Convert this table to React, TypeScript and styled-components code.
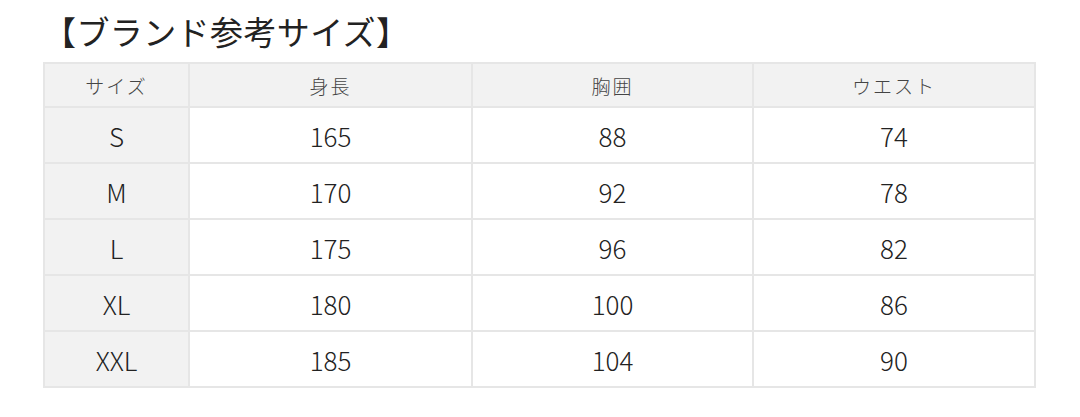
import React from "react";
import styled, { createGlobalStyle } from "styled-components";

const GlobalStyle = createGlobalStyle`
  body {
    margin: 0;
    background: #ffffff;
    font-family: "Noto Sans CJK JP", "Noto Sans", sans-serif;
  }
`;

type Row = {
  size: string;
  height: number;
  chest: number;
  waist: number;
};

const ROWS: Row[] = [
  { size: "S", height: 165, chest: 88, waist: 74 },
  { size: "M", height: 170, chest: 92, waist: 78 },
  { size: "L", height: 175, chest: 96, waist: 82 },
  { size: "XL", height: 180, chest: 100, waist: 86 },
  { size: "XXL", height: 185, chest: 104, waist: 90 },
];

const App: React.FC = () => {
  return (
    <Page>
      <GlobalStyle />
      <Title>【ブランド参考サイズ】</Title>
      <SizeTable>
        <colgroup>
          <col style={{ width: 145 }} />
          <col style={{ width: 283 }} />
          <col style={{ width: 281 }} />
          <col />
        </colgroup>
        <thead>
          <tr>
            <HeadCell>サイズ</HeadCell>
            <HeadCell>身長</HeadCell>
            <HeadCell>胸囲</HeadCell>
            <HeadCell>ウエスト</HeadCell>
          </tr>
        </thead>
        <tbody>
          {ROWS.map((row) => (
            <tr key={row.size}>
              <Cell $label>{row.size}</Cell>
              <Cell>{row.height}</Cell>
              <Cell>{row.chest}</Cell>
              <Cell>{row.waist}</Cell>
            </tr>
          ))}
        </tbody>
      </SizeTable>
    </Page>
  );
};

const Page = styled.div`
  padding: 12px 44px 0 43px;
  width: 993px;
`;

const Title = styled.h2`
  margin: 0 0 12px 0;
  height: 38px;
  line-height: 38px;
  font-size: 33px;
  font-weight: 400;
  color: #222;
  letter-spacing: 0.4px;
`;

const SizeTable = styled.table`
  width: 993px;
  border-collapse: collapse;
  table-layout: fixed;
  border: 2px solid #e6e6e6;
`;

const HeadCell = styled.th`
  height: 42px;
  padding: 0;
  background: #f2f2f2;
  border: 2px solid #e6e6e6;
  font-size: 19px;
  font-weight: 300;
  letter-spacing: 2px;
  color: #444;
  text-align: center;
  vertical-align: middle;
`;

const Cell = styled.td<{ $label?: boolean }>`
  height: 54px;
  padding: 0;
  background: ${(p) => (p.$label ? "#f2f2f2" : "#ffffff")};
  border: 2px solid #e6e6e6;
  font-size: 26px;
  font-weight: 300;
  color: #222;
  text-align: center;
  vertical-align: middle;
`;

export default App;
